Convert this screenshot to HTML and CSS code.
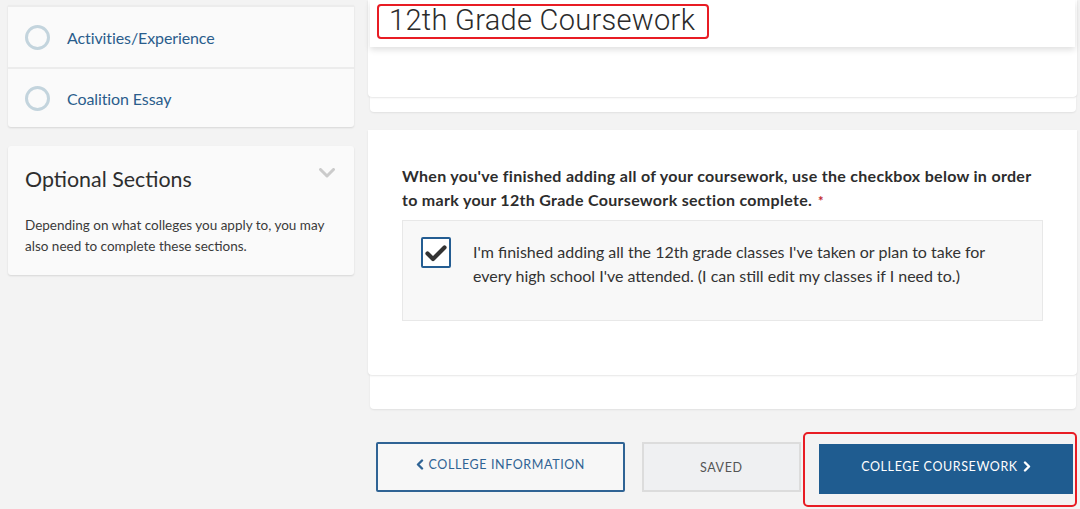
FILE: index.html
```html
<!DOCTYPE html>
<html>
<head>
<meta charset="utf-8">
<link rel="stylesheet" href="styles.css">
</head>
<body>
<div class="page">
  <aside class="sidebar">
    <div class="card nav-card">
      <div class="nav-item">
        <span class="circle"></span>
        <span class="nav-label">Activities/Experience</span>
      </div>
      <div class="nav-item">
        <span class="circle"></span>
        <span class="nav-label">Coalition Essay</span>
      </div>
    </div>
    <div class="card optional-card">
      <div class="optional-head">
        <h2 class="optional-title">Optional Sections</h2>
        <svg class="chevron" width="16" height="10" viewBox="0 0 16 10"><path d="M1.5 1.5 L8 8 L14.5 1.5" fill="none" stroke="#cbcbcb" stroke-width="3" stroke-linecap="round" stroke-linejoin="round"/></svg>
      </div>
      <p class="optional-text">Depending on what colleges you apply to, you may also need to complete these sections.</p>
    </div>
  </aside>
  <main class="main">
    <section class="panel panel-top">
      <div class="panel-body top-body">
        <div class="title-card">
          <h1 class="title"><span class="highlight">12th Grade Coursework</span></h1>
        </div>
      </div>
      <div class="panel-strip strip-top"></div>
    </section>
    <section class="panel panel-complete">
      <div class="panel-body complete-body">
        <p class="question">When you've finished adding all of your coursework, use the checkbox below in order to mark your 12th Grade Coursework section complete.<span class="req">*</span></p>
        <div class="check-box">
          <span class="checkbox">
            <svg width="22" height="18" viewBox="0 0 22 18"><path d="M2.5 9.5 L8 15 L19.5 3.5" fill="none" stroke="#333" stroke-width="4.2" stroke-linecap="round" stroke-linejoin="round"/></svg>
          </span>
          <span class="check-label">I'm finished adding all the 12th grade classes I've taken or plan to take for every high school I've attended. (I can still edit my classes if I need to.)</span>
        </div>
      </div>
      <div class="panel-strip strip-bottom"></div>
    </section>
    <div class="actions">
      <button class="btn btn-back"><svg class="caret-icon" width="8" height="11" viewBox="0 0 8 11"><path d="M6 1.5 L2 5.5 L6 9.5" fill="none" stroke="#2f6394" stroke-width="2.4" stroke-linecap="round" stroke-linejoin="round"/></svg>COLLEGE INFORMATION</button>
      <button class="btn btn-saved">SAVED</button>
      <div class="next-wrap">
        <button class="btn btn-next">COLLEGE COURSEWORK<svg class="caret-icon caret-right" width="8" height="11" viewBox="0 0 8 11"><path d="M2 1.5 L6 5.5 L2 9.5" fill="none" stroke="#fff" stroke-width="2.4" stroke-linecap="round" stroke-linejoin="round"/></svg></button>
      </div>
    </div>
  </main>
</div>
</body>
</html>
```

FILE: styles.css
```css
* { box-sizing: border-box; }
html, body {
  margin: 0;
  padding: 0;
  background: #f3f3f3;
  font-family: "Lato", "Liberation Sans", sans-serif;
  color: #333;
  overflow: hidden;
}
.page {
  display: flex;
  gap: 14px;
  padding-left: 8px;
  width: 1080px;
  height: 509px;
}
.sidebar {
  width: 346px;
  flex: none;
  display: flex;
  flex-direction: column;
  gap: 19px;
  margin-top: -1px;
}
.card {
  background: #fafafa;
  border-radius: 0 0 3px 3px;
  box-shadow: 0 1px 2px rgba(0,0,0,0.12);
}
.nav-card {
  border-top: 2px solid #ececec;
  margin-top: 6px;
}
.nav-item {
  display: flex;
  align-items: center;
  height: 60px;
  padding-left: 17px;
}
.nav-item + .nav-item {
  border-top: 2px solid #ececec;
}
.circle {
  width: 25px;
  height: 25px;
  border: 3px solid #c3d4dd;
  border-radius: 50%;
  flex: none;
}
.nav-label {
  margin-left: 17px;
  font-size: 16px;
  color: #2a5d8c;
  letter-spacing: -0.1px;
}
.optional-card {
  border-radius: 3px;
  padding: 17px 17px 20px 17px;
  height: 129px;
}
.optional-head {
  display: flex;
  justify-content: space-between;
  align-items: flex-start;
}
.optional-title {
  margin: 3px 0 0 0;
  font-size: 21.4px;
  font-weight: 400;
  color: #2e2e2e;
}
.chevron {
  margin-top: 5px;
  margin-right: 2px;
}
.optional-text {
  margin: 23px 0 0 0;
  font-size: 13.5px;
  line-height: 21px;
  color: #3a3a3a;
}
.main {
  width: 709px;
  flex: none;
  display: flex;
  flex-direction: column;
}
.panel-body {
  background: #fff;
  border-radius: 0 0 4px 4px;
  box-shadow: 0 1px 2px rgba(0,0,0,0.10);
  position: relative;
  z-index: 1;
}
.panel-strip {
  background: #fff;
  margin: 0 1px 0 2px;
  border-radius: 0 0 4px 4px;
  box-shadow: 0 1px 2px rgba(0,0,0,0.08);
}
.top-body {
  height: 97px;
  padding: 0 2px;
}
.title-card {
  background: #fff;
  height: 47px;
  box-shadow: 0 3px 6px rgba(0,0,0,0.12);
  padding-left: 7px;
  padding-top: 4px;
}
.title {
  margin: 0;
  display: inline-block;
  font-family: "Roboto", "Liberation Sans", sans-serif;
  font-weight: 300;
  font-size: 29px;
  line-height: 26px;
  color: #2b2b2b;
}
.highlight {
  display: inline-block;
  border: 2px solid #e81c24;
  border-radius: 4px;
  padding: 1px 12px 4px 10px;
  letter-spacing: 0.3px;
}
.strip-top { height: 15px; }
.panel-complete { margin-top: 18px; }
.complete-body {
  height: 245px;
  padding: 34px 34px 0 34px;
}
.question {
  margin: 0;
  font-size: 16px;
  font-weight: 700;
  line-height: 24px;
  color: #2d2d2d;
  letter-spacing: 0.3px;
}
.req {
  display: inline-block;
  margin-left: 6px;
  color: #c0262d;
  font-size: 13px;
  line-height: 1;
}
.check-box {
  margin-top: 8px;
  width: 641px;
  height: 101px;
  background: #f8f8f8;
  border: 1px solid #e8e8e8;
  display: flex;
  align-items: flex-start;
  padding: 16px 20px 0 18px;
}
.checkbox {
  width: 30px;
  height: 31px;
  border: 2px solid #245d92;
  border-radius: 2px;
  background: #fff;
  display: flex;
  align-items: center;
  justify-content: center;
  flex: none;
}
.check-label {
  margin-left: 22px;
  margin-top: 3px;
  font-size: 16px;
  line-height: 24px;
  color: #333;
  letter-spacing: 0px;
}
.strip-bottom { height: 34px; }
.actions {
  display: flex;
  align-items: flex-start;
  margin-top: 33px;
  padding-left: 8px;
}
.btn {
  font-family: "Lato", "Liberation Sans", sans-serif;
  font-size: 12.5px;
  letter-spacing: 0.6px;
  height: 50px;
  cursor: pointer;
  display: flex;
  align-items: center;
  justify-content: center;
}
.caret-icon { margin-right: 5px; flex: none; }
.caret-right { margin-right: 0; margin-left: 5px; }
.btn-back {
  width: 251px;
  background: #f7f7f7;
  border: 2px solid #2f6394;
  border-radius: 2px;
  color: #2f6394;
  padding-bottom: 6px;
}
.btn-saved {
  margin-left: 17px;
  width: 161px;
  background: #eff0f2;
  border: 2px solid #dcdcdc;
  color: #555;
}
.next-wrap {
  margin-left: 2px;
  margin-top: -10px;
  border: 2px solid #e81c24;
  border-radius: 5px;
  padding: 10px 2px 11px 14px;
}
.btn-next {
  width: 254px;
  height: 50px;
  background: #1f5c90;
  border: none;
  color: #fff;
  padding-bottom: 6px;
}
```
